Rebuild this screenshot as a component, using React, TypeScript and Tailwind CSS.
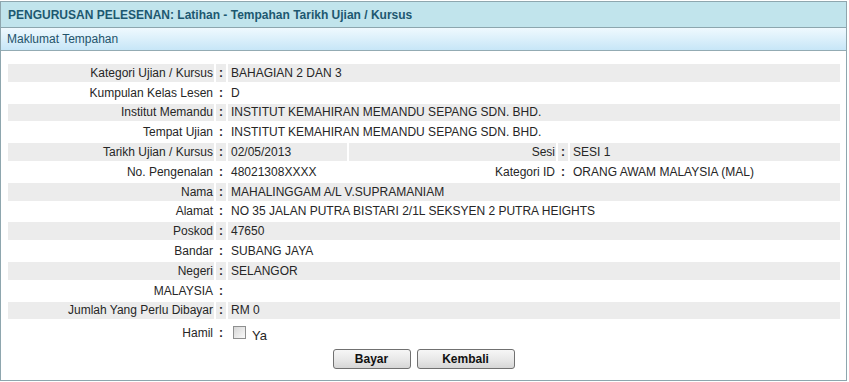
import React from 'react';

type Row = {
  label: string;
  value?: string;
  label2?: string;
  value2?: string;
};

const rows: Row[] = [
  { label: 'Kategori Ujian / Kursus', value: 'BAHAGIAN 2 DAN 3' },
  { label: 'Kumpulan Kelas Lesen', value: 'D' },
  { label: 'Institut Memandu', value: 'INSTITUT KEMAHIRAN MEMANDU SEPANG SDN. BHD.' },
  { label: 'Tempat Ujian', value: 'INSTITUT KEMAHIRAN MEMANDU SEPANG SDN. BHD.' },
  { label: 'Tarikh Ujian / Kursus', value: '02/05/2013', label2: 'Sesi', value2: 'SESI 1' },
  { label: 'No. Pengenalan', value: '48021308XXXX', label2: 'Kategori ID', value2: 'ORANG AWAM MALAYSIA (MAL)' },
  { label: 'Nama', value: 'MAHALINGGAM A/L V.SUPRAMANIAM' },
  { label: 'Alamat', value: 'NO 35 JALAN PUTRA BISTARI 2/1L SEKSYEN 2 PUTRA HEIGHTS' },
  { label: 'Poskod', value: '47650' },
  { label: 'Bandar', value: 'SUBANG JAYA' },
  { label: 'Negeri', value: 'SELANGOR' },
  { label: 'MALAYSIA', value: '' },
  { label: 'Jumlah Yang Perlu Dibayar', value: 'RM 0' },
];

function Cells({ row, gray }: { row: Row; gray: boolean }) {
  const bg = gray ? 'bg-[#ececec]' : 'bg-white';
  const cell = `${bg} h-[17.8px] p-0 align-middle`;
  const colon = `${cell} text-center font-bold`;
  if (row.label2) {
    return (
      <>
        <td className={`${cell} text-right pr-[1px]`}>{row.label}</td>
        <td className={colon}>:</td>
        <td className={`${cell} pl-[3px]`}>{row.value}</td>
        <td className={`${cell} text-right pr-[1px]`}>{row.label2}</td>
        <td className={colon}>:</td>
        <td className={`${cell} pl-[3px]`}>{row.value2}</td>
      </>
    );
  }
  return (
    <>
      <td className={`${cell} text-right pr-[1px]`}>{row.label}</td>
      <td className={colon}>:</td>
      <td className={`${cell} pl-[3px]`} colSpan={4}>{row.value}</td>
    </>
  );
}

export default function App() {
  return (
    <div className="w-[849px] h-[382px] bg-white pt-[1px] font-['Liberation_Sans',Arial,sans-serif] text-[12px] text-[#262626] leading-none">
      <div className="w-[847px] h-[380px] border border-[#8ea6ae] flex flex-col">
        {/* judul */}
        <div className="h-[26px] bg-[#c1e4ec] border-b border-[#8ca6ae] pl-[7px] flex items-center font-bold text-[#1d5870]">
          PENGURUSAN PELESENAN: Latihan - Tempahan Tarikh Ujian / Kursus
        </div>
        <div className="h-[23px] bg-gradient-to-b from-[#eff9fe] to-[#c7e6f7] border-b border-[#93abb3] pl-[6px] flex items-center text-[#23536a]">
          Maklumat Tempahan
        </div>

        <div className="flex-1 pt-[11px] pl-[5px] pr-[3px] flex flex-col">
          <table className="w-[836px] table-fixed border-separate border-spacing-[2px]">
            <colgroup>
              <col className="w-[206px]" />
              <col className="w-[10px]" />
              <col className="w-[119px]" />
              <col className="w-[207px]" />
              <col className="w-[10px]" />
              <col />
            </colgroup>
            <tbody>
              {rows.map((r, i) => (
                <tr key={r.label}>
                  <Cells row={r} gray={i % 2 === 0} />
                </tr>
              ))}
              <tr>
                <td className="h-[23px] p-0 text-right pr-[1px] align-middle">Hamil</td>
                <td className="h-[23px] p-0 text-center font-bold align-middle">:</td>
                <td className="h-[23px] p-0 pl-[5px] align-middle" colSpan={4}>
                  <label className="flex items-center gap-[6px]">
                    <span className="inline-block w-[13px] h-[13px] border border-[#8e8f8f] bg-gradient-to-br from-[#d6d6d6] to-[#fafafa]" />
                    <span className="text-[13px] mt-[5px]">Ya</span>
                  </label>
                </td>
              </tr>
            </tbody>
          </table>

          <div className="mt-[3px] flex justify-center gap-[6px] pr-[2px]">
            <button className="w-[78px] h-[20px] rounded-[3px] border border-[#707070] bg-gradient-to-b from-[#f6f6f6] via-[#e9e9e9] to-[#d6d6d6] font-bold text-[#111] text-[12px]">
              Bayar
            </button>
            <button className="w-[98px] h-[20px] rounded-[3px] border border-[#707070] bg-gradient-to-b from-[#f6f6f6] via-[#e9e9e9] to-[#d6d6d6] font-bold text-[#111] text-[12px]">
              Kembali
            </button>
          </div>
        </div>
      </div>
    </div>
  );
}
